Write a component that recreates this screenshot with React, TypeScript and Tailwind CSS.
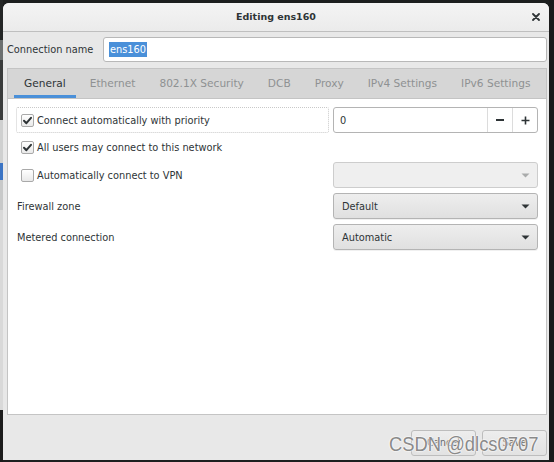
import React from "react";

const font = { fontFamily: '"DejaVu Sans", sans-serif' };

function Check({ checked }: { checked: boolean }) {
  return (
    <div className="w-[13px] h-[13px] shrink-0 rounded-[2px] border border-[#a9a9a9] bg-gradient-to-b from-[#ffffff] to-[#e9e9e9] flex items-center justify-center">
      {checked && (
        <svg width="11" height="11" viewBox="0 0 11 11">
          <path d="M2 5.8 L4.4 8.2 L9 2.8" fill="none" stroke="#2e3436" strokeWidth="2" strokeLinecap="round" strokeLinejoin="round" />
        </svg>
      )}
    </div>
  );
}

function Arrow({ color }: { color: string }) {
  return (
    <svg width="9" height="5" viewBox="0 0 9 5">
      <path d="M0.5 0.5 L8.5 0.5 L4.5 4.5 Z" fill={color} />
    </svg>
  );
}

function Combo({ text, disabled }: { text?: string; disabled?: boolean }) {
  return (
    <div
      className={
        disabled
          ? "h-full rounded-[3px] border border-[#cdcdcd] bg-[#efefef] flex items-center justify-between pl-[8px] pr-[7px]"
          : "h-full rounded-[3px] border border-[#b4b4b4] bg-gradient-to-b from-[#eeeeee] to-[#e0e0e0] shadow-[0_1px_0_rgba(0,0,0,0.06)] flex items-center justify-between pl-[8px] pr-[7px]"
      }
    >
      <span className="text-[9.8px] leading-[14px] pt-[1px] text-[#2e3436]">{text}</span>
      <Arrow color={disabled ? "#a9abab" : "#2e3436"} />
    </div>
  );
}

const tabs = ["General", "Ethernet", "802.1X Security", "DCB", "Proxy", "IPv4 Settings", "IPv6 Settings"];

export default function App() {
  return (
    <div className="w-[554px] h-[462px] bg-[#1d1f1f] flex overflow-hidden relative" style={font}>
      {/* left strip of background window */}
      <div className="w-[3px] flex flex-col shrink-0">
        <div className="h-[40px] bg-[#232525]" />
        <div className="h-[20px] bg-[#6d7070]" />
        <div className="h-[60px] bg-[#3a3c3c]" />
        <div className="h-[43px] bg-[#cfd0d0]" />
        <div className="h-[17px] bg-[#3b74c4]" />
        <div className="h-[30px] bg-[#c8c9c9]" />
        <div className="h-[200px] bg-[#d9d9d9]" />
        <div className="flex-1 bg-[#1b1b1b]" />
      </div>

      {/* window */}
      <div className="w-[546px] h-[457px] mt-[3px] rounded-t-[6px] bg-[#e8e8e8] flex flex-col overflow-hidden shrink-0">
        {/* title bar */}
        <div className="h-[29px] shrink-0 bg-gradient-to-b from-[#f4f4f4] to-[#ebebeb] border-b border-[#bfbfbf] relative flex items-center justify-center">
          <span className="text-[9.5px] font-bold text-[#2e3436]">Editing ens160</span>
          <div className="absolute right-[9px] top-0 h-full flex items-center">
            <svg width="8" height="8" viewBox="0 0 8 8">
              <path d="M1 1 L7 7 M7 1 L1 7" stroke="#2e3436" strokeWidth="1.8" strokeLinecap="round" />
            </svg>
          </div>
        </div>

        {/* connection name */}
        <div className="flex items-center pl-[4px] pr-[2px] mt-[5px] h-[25px] shrink-0">
          <span className="text-[9.8px] leading-[14px] pt-[1px] text-[#2e3436] w-[96px] shrink-0">Connection name</span>
          <div className="flex-1 h-full bg-white border border-[#b8b8b8] rounded-[3px] flex items-center pl-[5px]">
            <span className="text-[9.8px] text-white bg-[#4a90d9] px-[1px] leading-[15px]">ens160</span>
          </div>
        </div>

        {/* notebook */}
        <div className="mt-[6px] ml-[4px] mr-[2px] h-[347px] border border-[#c4c4c4] flex flex-col shrink-0">
          <div className="h-[29px] bg-[#d6d6d6] flex items-stretch pl-[4px] shrink-0">
            {tabs.map((t, i) => (
              <div
                key={t}
                className={
                  i === 0
                    ? "mx-[2px] px-[10px] flex items-center border-b-[3px] border-[#4a90d9] pt-[3px] text-[10.6px] text-[#2e3436]"
                    : "mx-[2px] px-[10px] flex items-center border-b-[3px] border-transparent pt-[3px] text-[10.6px] text-[#8e9192]"
                }
              >
                {t}
              </div>
            ))}
          </div>
          <div className="flex-1 bg-white border-t border-[#c4c4c4] px-[8px] pt-[8px]">
            <div className="grid grid-cols-[1fr_205px] grid-rows-[26px_19px_26px_26px_26px] gap-x-[4px] gap-y-[5px] text-[9.8px] leading-[14px] text-[#2e3436]">
              <div className="border border-dotted border-[#c9c9c9] rounded-[2px] flex items-center pl-[4px] gap-[3px]">
                <Check checked />
                <span className="pt-[1px]">Connect automatically with priority</span>
              </div>
              <div className="bg-white border border-[#b4b4b4] rounded-[3px] flex items-stretch">
                <div className="flex-1 flex items-center pl-[6px] pt-[1px]">0</div>
                <div className="w-[25px] border-l border-[#dcdcdc] flex items-center justify-center">
                  <div className="w-[8px] h-[1.5px] bg-[#2e3436]" />
                </div>
                <div className="w-[25px] border-l border-[#dcdcdc] flex items-center justify-center">
                  <svg width="9" height="9" viewBox="0 0 9 9">
                    <path d="M4.5 0.5 V8.5 M0.5 4.5 H8.5" stroke="#2e3436" strokeWidth="1.6" />
                  </svg>
                </div>
              </div>

              <div className="col-span-2 flex items-center pl-[5px] gap-[3px]">
                <Check checked />
                <span className="pt-[1px]">All users may connect to this network</span>
              </div>

              <div className="flex items-center pl-[5px] gap-[3px]">
                <Check checked={false} />
                <span className="pt-[1px]">Automatically connect to VPN</span>
              </div>
              <Combo disabled />

              <div className="flex items-center pl-[1px] pt-[1px]">Firewall zone</div>
              <Combo text="Default" />

              <div className="flex items-center pl-[1px] pt-[1px]">Metered connection</div>
              <Combo text="Automatic" />
            </div>
          </div>
        </div>

        {/* footer buttons */}
        <div className="flex justify-end gap-[6px] pr-[2px] mt-[15px]">
          <div className="w-[65px] h-[26px] rounded-[3px] border border-[#bdbdbd] bg-gradient-to-b from-[#ededed] to-[#e2e2e2] flex items-center justify-center text-[9.8px] text-[#666]">
            Cancel
          </div>
          <div className="w-[65px] h-[26px] rounded-[3px] border border-[#bdbdbd] bg-gradient-to-b from-[#ededed] to-[#e2e2e2] flex items-center justify-center text-[9.8px] text-[#666]">
            Save
          </div>
        </div>
      </div>

      {/* right strip */}
      <div className="flex-1 bg-[#1b1b1b]" />

      {/* watermark */}
      <div className="absolute left-[389px] top-[431px] whitespace-nowrap origin-left scale-x-[0.875] font-['Liberation_Sans',Arial,sans-serif] text-[21px] leading-[26px] text-[#8a8a8a] [text-shadow:0_0_2px_#ffffff,0_0_2px_#ffffff,0_0_1px_#ffffff]">
        CSDN @dlcs0707
      </div>
    </div>
  );
}
